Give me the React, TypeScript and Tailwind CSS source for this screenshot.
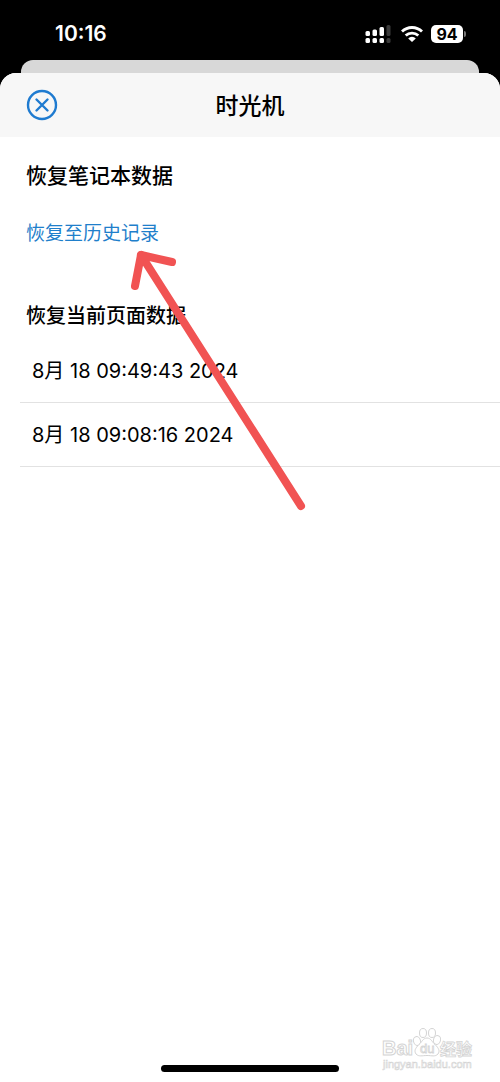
const SNAPSHOTS = ["8月 18 09:49:43 2024", "8月 18 09:08:16 2024"];

function SignalIcon() {
  return (
    <svg width="26" height="20" viewBox="0 0 26 20" fill="#fff" aria-hidden="true">
      <rect x="0.500" y="7" width="4.500" height="5" rx="1.500" />
      <rect x="7.500" y="5.500" width="4.500" height="6.500" rx="1.500" />
      <rect x="14.500" y="3" width="4.500" height="9" rx="1.500" />
      <rect x="21.500" y="1" width="4" height="11" rx="1.500" fill="#3a3a3a" />
      <rect x="0.500" y="14" width="4.500" height="5" rx="1.500" />
      <rect x="7.500" y="14" width="4.500" height="5" rx="1.500" />
      <rect x="14.500" y="14" width="4.500" height="5" rx="1.500" />
      <rect x="21.500" y="14" width="4" height="5" rx="1.500" fill="#3a3a3a" />
    </svg>
  );
}

function WifiIcon() {
  return (
    <svg width="22" height="16" viewBox="0 0 22 16" fill="none" stroke="#fff" strokeWidth="2.8" aria-hidden="true">
      <path d="M1 5.600a14.200 14.200 0 0 1 20 0" />
      <path d="M4.700 9.600a9 9 0 0 1 12.600 0" />
      <path d="M11 16 7.200 12.400a5.400 5.400 0 0 1 7.600 0Z" fill="#fff" stroke="none" />
    </svg>
  );
}

function StatusBar() {
  return (
    <div className="flex h-15 items-center justify-between pt-2 pr-[34px] pl-[55px] text-white">
      <span className="text-[21px] leading-6 font-semibold">10:16</span>
      <div className="flex items-center">
        <SignalIcon />
        <span className="ml-2.5">
          <WifiIcon />
        </span>
        <span className="ml-2 flex h-[18px] w-8 items-center justify-center rounded-[5px] bg-white text-base leading-4 font-bold text-black">
          94
        </span>
        <span className="ml-px h-1.5 w-0.5 rounded-r-full bg-[#777]" />
      </div>
    </div>
  );
}

function Watermark() {
  return (
    <svg
      className="absolute right-4 bottom-1.5 h-[50px] w-[104px]"
      viewBox="0 0 104 50"
      fill="#fff"
      stroke="#d4d4d4"
      strokeWidth="1"
      aria-hidden="true"
    >
      <text x="2" y="29" fontSize="20" fontWeight="700" fontFamily="Liberation Sans, sans-serif">
        Bai
      </text>
      <ellipse cx="37" cy="15" rx="3.500" ry="4.500" transform="rotate(-15 37 15)" />
      <ellipse cx="43" cy="7" rx="3.500" ry="4.500" />
      <ellipse cx="52" cy="7" rx="3.500" ry="4.500" />
      <ellipse cx="57" cy="14" rx="3.500" ry="4.500" transform="rotate(15 57 14)" />
      <path d="M47 12c-4 0-5 4-8 6.500-4 4-5 6.500-3 9.500 3 3 6 1.500 11 1.500s8 1.500 11-1.500c2-3 1-5.500-3-9.500-3-2.500-4-6.500-8-6.500Z" />
      <text x="40" y="27" fontSize="13" strokeWidth="0.800" fontFamily="Liberation Sans, sans-serif">
        du
      </text>
      <text x="60" y="29" fontSize="16" fontWeight="700" strokeWidth="0.800" fontFamily="Noto Sans CJK SC, sans-serif">
        经验
      </text>
      <text x="3" y="42" fontSize="11" strokeWidth="0.600" fontFamily="Liberation Sans, sans-serif">
        jingyan.baidu.com
      </text>
    </svg>
  );
}

function PointerArrow() {
  return (
    <svg
      className="pointer-events-none absolute top-[240px] left-[120px] h-[280px] w-[200px]"
      viewBox="120 240 200 280"
      fill="none"
      stroke="#f15353"
      strokeWidth="8"
      strokeLinecap="round"
      strokeLinejoin="round"
      aria-hidden="true"
    >
      <path d="M301 506 141 255" />
      <path d="M135 286 141 255 172 262" />
    </svg>
  );
}

export default function App() {
  return (
    <div className="relative flex min-h-screen flex-col bg-black font-['Inter','Noto_Sans_CJK_SC',sans-serif] text-black">
      <StatusBar />
      <div className="mx-[21px] h-[13px] rounded-t-xl bg-[#d8d8d8]" />

      <main className="relative flex flex-1 flex-col overflow-hidden rounded-t-2xl bg-white">
        <header className="grid h-16 grid-cols-[1fr_auto_1fr] items-center bg-[#f7f7f7] px-[26px]">
          <button type="button" aria-label="关闭" className="size-8 text-[#1f7bd0]">
            <svg viewBox="0 0 32 32" fill="none" stroke="currentColor" strokeWidth="2.4" strokeLinecap="round">
              <circle cx="16" cy="16" r="14" />
              <path d="m10.500 10.500 11 11M21.500 10.500l-11 11" />
            </svg>
          </button>
          <h1 className="pt-0.5 text-[23px] leading-8 font-medium">时光机</h1>
        </header>

        <section className="px-[26px] pt-[25px]">
          <h2 className="text-[21px] leading-7 font-medium">恢复笔记本数据</h2>
          <a href="#history" className="mt-[30px] block w-fit text-[19px] leading-7 text-[#1f7fcb]">
            恢复至历史记录
          </a>
        </section>

        <section className="pt-[54px]">
          <h2 className="px-[26px] text-xl leading-7 font-medium">恢复当前页面数据</h2>
          <ul className="mt-[9px] ml-5">
            {SNAPSHOTS.map((label) => (
              <li key={label} className="border-b border-[#e2e2e2]">
                <button type="button" className="h-[63px] w-full px-3 text-left text-xl leading-7">
                  {label}
                </button>
              </li>
            ))}
          </ul>
        </section>

        <Watermark />
        <div className="mx-auto mt-auto mb-2.5 h-[7px] w-[178px] rounded-full bg-black" />
      </main>

      <PointerArrow />
    </div>
  );
}
